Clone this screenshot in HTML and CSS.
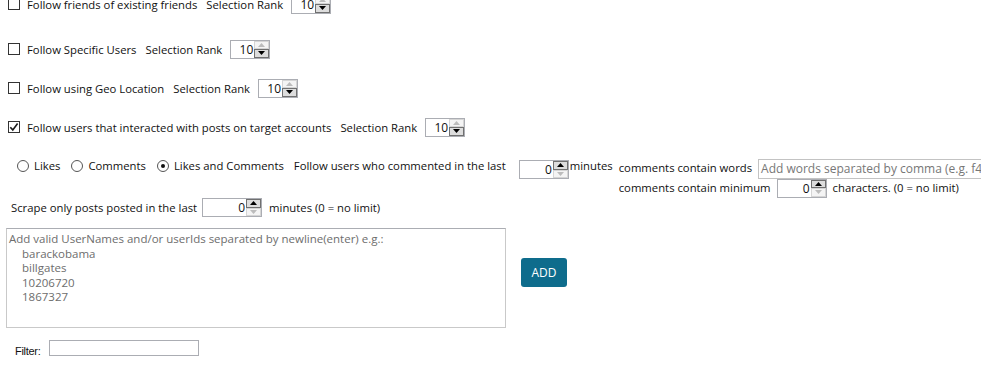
FILE: index.html
```html
<!DOCTYPE html>
<html lang="en">
<head>
    <meta charset="UTF-8">
    <meta name="viewport" content="width=device-width, initial-scale=1.0">
    <title>Follow Settings</title>
    <link rel="stylesheet" href="styles.css">
</head>
<body>
    <div class="panel">
        <div class="opt opt-first">
            <label class="check"><span class="box"></span><span>Follow friends of existing friends</span></label>
            <span class="rank-label">Selection Rank</span>
            <span class="spin spin-rank">
                <span class="spin-val">10</span>
                <span class="spin-btns">
                    <span class="spin-btn off"><svg width="7" height="4" viewBox="0 0 7 4"><polygon points="0,4 3.5,0 7,4"/></svg></span>
                    <span class="spin-btn"><svg width="7" height="4" viewBox="0 0 7 4"><polygon points="0,0 3.5,4 7,0"/></svg></span>
                </span>
            </span>
        </div>

        <div class="opt opt-2">
            <label class="check"><span class="box"></span><span>Follow Specific Users</span></label>
            <span class="rank-label">Selection Rank</span>
            <span class="spin spin-rank">
                <span class="spin-val">10</span>
                <span class="spin-btns">
                    <span class="spin-btn off"><svg width="7" height="4" viewBox="0 0 7 4"><polygon points="0,4 3.5,0 7,4"/></svg></span>
                    <span class="spin-btn"><svg width="7" height="4" viewBox="0 0 7 4"><polygon points="0,0 3.5,4 7,0"/></svg></span>
                </span>
            </span>
        </div>

        <div class="opt opt-3">
            <label class="check"><span class="box"></span><span>Follow using Geo Location</span></label>
            <span class="rank-label">Selection Rank</span>
            <span class="spin spin-rank">
                <span class="spin-val">10</span>
                <span class="spin-btns">
                    <span class="spin-btn off"><svg width="7" height="4" viewBox="0 0 7 4"><polygon points="0,4 3.5,0 7,4"/></svg></span>
                    <span class="spin-btn"><svg width="7" height="4" viewBox="0 0 7 4"><polygon points="0,0 3.5,4 7,0"/></svg></span>
                </span>
            </span>
        </div>

        <div class="opt opt-4">
            <label class="check"><span class="box checked"><svg width="12" height="12" viewBox="0 0 12 12"><path d="M2.3 6.2 L4.8 8.9 L9.6 2.6" fill="none" stroke="#1a1a1a" stroke-width="1.6"/></svg></span><span>Follow users that interacted with posts on target accounts</span></label>
            <span class="rank-label">Selection Rank</span>
            <span class="spin spin-rank">
                <span class="spin-val">10</span>
                <span class="spin-btns">
                    <span class="spin-btn off"><svg width="7" height="4" viewBox="0 0 7 4"><polygon points="0,4 3.5,0 7,4"/></svg></span>
                    <span class="spin-btn"><svg width="7" height="4" viewBox="0 0 7 4"><polygon points="0,0 3.5,4 7,0"/></svg></span>
                </span>
            </span>
        </div>

        <div class="interact">
            <div class="radios">
                <label class="radio"><span class="dot"></span>Likes</label>
                <label class="radio"><span class="dot"></span>Comments</label>
                <label class="radio"><span class="dot on"></span>Likes and Comments</label>
            </div>
            <span class="txt commented">Follow users who commented in the last</span>
            <span class="spin spin-wide spin-top">
                <span class="spin-val">0</span>
                <span class="spin-btns">
                    <span class="spin-btn"><svg width="7" height="4" viewBox="0 0 7 4"><polygon points="0,4 3.5,0 7,4"/></svg></span>
                    <span class="spin-btn off"><svg width="7" height="4" viewBox="0 0 7 4"><polygon points="0,0 3.5,4 7,0"/></svg></span>
                </span>
            </span>
            <span class="txt minutes">minutes</span>
            <div class="comment-rules">
                <div class="rule">
                    <span class="txt">comments contain words</span>
                    <span class="words-input">Add words separated by comma (e.g. f4f,l4l)</span>
                </div>
                <div class="rule">
                    <span class="txt">comments contain minimum</span>
                    <span class="spin spin-wide">
                        <span class="spin-val">0</span>
                        <span class="spin-btns">
                            <span class="spin-btn"><svg width="7" height="4" viewBox="0 0 7 4"><polygon points="0,4 3.5,0 7,4"/></svg></span>
                            <span class="spin-btn off"><svg width="7" height="4" viewBox="0 0 7 4"><polygon points="0,0 3.5,4 7,0"/></svg></span>
                        </span>
                    </span>
                    <span class="txt">characters. (0 = no limit)</span>
                </div>
            </div>
        </div>

        <div class="scrape">
            <span class="txt">Scrape only posts posted in the last</span>
            <span class="spin spin-long">
                <span class="spin-val">0</span>
                <span class="spin-btns">
                    <span class="spin-btn"><svg width="7" height="4" viewBox="0 0 7 4"><polygon points="0,4 3.5,0 7,4"/></svg></span>
                    <span class="spin-btn off"><svg width="7" height="4" viewBox="0 0 7 4"><polygon points="0,0 3.5,4 7,0"/></svg></span>
                </span>
            </span>
            <span class="txt">minutes (0 = no limit)</span>
        </div>

        <div class="users">
            <div class="users-box">
                <div>Add valid UserNames and/or userIds separated by newline(enter) e.g.:</div>
                <div class="ex">barackobama</div>
                <div class="ex">billgates</div>
                <div class="ex">10206720</div>
                <div class="ex">1867327</div>
            </div>
            <button class="add-btn">ADD</button>
        </div>

        <div class="filter">
            <label for="filter">Filter:</label>
            <input type="text" id="filter">
        </div>
    </div>
</body>
</html>
```

FILE: styles.css
```css
body {
    margin: 0;
    padding: 0;
    background-color: #fff;
    font-family: "Open Sans", "Noto Sans", sans-serif;
    font-size: 11.3px;
    color: #111;
    overflow: hidden;
}

.panel {
    padding-left: 8px;
    white-space: nowrap;
}

.opt {
    display: flex;
    align-items: center;
    height: 20px;
}

.opt-first {
    margin-top: -6px;
}

.opt-2 {
    margin-top: 25px;
}

.opt-3,
.opt-4 {
    margin-top: 19px;
}

.check {
    display: flex;
    align-items: center;
    gap: 7px;
}

.box {
    width: 12px;
    height: 12px;
    box-sizing: border-box;
    border: 1px solid #333;
    background: #fff;
    display: flex;
}

.box.checked svg {
    margin: -1px;
}

.rank-label {
    margin-left: 9px;
    margin-right: 8px;
}

/* numeric up/down */
.spin {
    display: inline-flex;
    flex-shrink: 0;
    box-sizing: border-box;
    height: 19px;
    border: 1px solid #abadb3;
    background: #fff;
}

.spin-rank {
    width: 40px;
}

.spin-wide {
    width: 50px;
}

.spin-long {
    width: 60px;
}

.spin-val {
    flex: 1;
    text-align: right;
    font-size: 12px;
    line-height: 17px;
    padding-right: 1px;
}

.spin-btns {
    width: 15px;
    display: flex;
    flex-direction: column;
}

.spin-btn {
    flex: 1;
    display: flex;
    align-items: center;
    justify-content: center;
    background: #dddddd;
    border: 1px solid #707070;
}

.spin-btn svg {
    fill: #000;
}

.spin-btn.off {
    background: #f4f4f4;
    border-color: #d5d5d5;
}

.spin-btn.off svg {
    fill: #bcbcbc;
}

/* likes / comments row */
.interact {
    display: flex;
    align-items: flex-start;
    margin-top: 21px;
    height: 40px;
}

.interact > * {
    flex-shrink: 0;
}

.txt {
    line-height: 16px;
}

.radios {
    display: flex;
    gap: 11px;
    padding-left: 9px;
    line-height: 16px;
}

.radio {
    display: flex;
    align-items: center;
    gap: 5px;
}

.dot {
    width: 12px;
    height: 12px;
    box-sizing: border-box;
    border: 1px solid #555;
    border-radius: 50%;
    display: flex;
    align-items: center;
    justify-content: center;
}

.dot.on::after {
    content: "";
    width: 4px;
    height: 4px;
    border-radius: 50%;
    background: #111;
}

.commented {
    margin-left: 10px;
}

.spin-top {
    margin-left: 13px;
    margin-top: 2px;
}

.minutes {
    margin-left: 1px;
}

.comment-rules {
    margin-left: 6px;
    display: flex;
    flex-direction: column;
}

.rule {
    display: flex;
    align-items: center;
    gap: 6px;
    height: 20px;
}

.words-input {
    width: 260px;
    height: 20px;
    box-sizing: border-box;
    border: 1px solid #c3c3c3;
    color: #777;
    font-size: 12px;
    line-height: 18px;
    padding-left: 2px;
    margin-top: 2px;
}

/* scrape row */
.scrape {
    display: flex;
    align-items: center;
    gap: 5px;
    margin-top: 0;
    padding-left: 3px;
}

.scrape .spin {
    margin-right: 2px;
}

/* users list */
.users {
    display: flex;
    align-items: flex-start;
    margin-top: 11px;
    margin-left: -2px;
}

.users-box {
    width: 500px;
    height: 100px;
    box-sizing: border-box;
    border: 1px solid #abadb3;
    border-color: #abadb3 #c9c9c9 #c9c9c9 #c9c9c9;
    color: #6d6d6d;
    font-size: 11.5px;
    line-height: 14.5px;
    padding: 3px 2px;
}

.users-box .ex {
    padding-left: 13px;
}

.add-btn {
    margin-left: 15px;
    margin-top: 30px;
    width: 46px;
    height: 29px;
    border: none;
    border-radius: 3px;
    background-color: #0e6c8c;
    color: #fff;
    font-family: "Open Sans", sans-serif;
    font-size: 12px;
    padding: 0;
}

/* filter */
.filter {
    display: flex;
    align-items: center;
    gap: 4px;
    margin-top: 11px;
    padding-left: 7px;
}

.filter label {
    font-family: "Liberation Sans", sans-serif;
    font-size: 11px;
    letter-spacing: -0.3px;
    margin-top: 6px;
    width: 30px;
}

.filter input {
    width: 150px;
    height: 16px;
    box-sizing: border-box;
    border: 1px solid #abadb3;
    margin: 0;
    padding: 0;
}
```
